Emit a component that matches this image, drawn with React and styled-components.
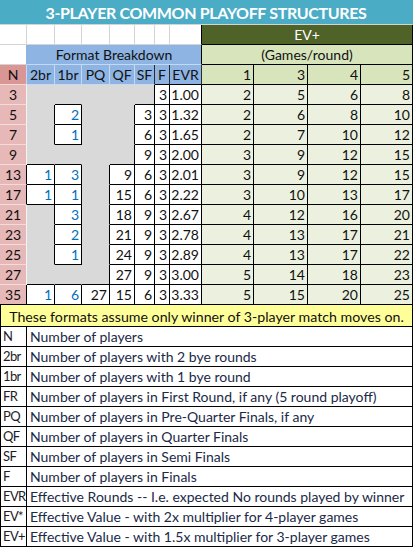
import React from "react";
import styled, { createGlobalStyle } from "styled-components";

const GlobalStyle = createGlobalStyle`
  body {
    margin: 0;
    background: #ffffff;
    font-family: Lato, "Liberation Sans", sans-serif;
  }
`;

const BLACK = "#000000";
const GRAY = "#d9d9d9";
const PINK = "#e6b8b7";
const PINK_LINE = "#f2dcdb";
const GRID = "#d4d4d4";
const BLUE_HEAD = "#8db4e2";
const BLUE_LINE = "#c5d9f1";
const GREEN_HEAD = "#d8e4bc";
const GREEN_CELL = "#ebf1de";
const OLIVE = "#4f6228";
const TEAL = "#4bacc6";
const NUM_BLUE = "#0070c0";

const Sheet = styled.div`
  display: grid;
  grid-template-columns: 27px 28px 27px 28px 25px 20px 15px 32px 52px 54px 53px 52px;
  grid-auto-rows: minmax(20px, auto);
  width: 414px;
  font-size: 14px;
  color: #111111;
`;

const Cell = styled.div`
  grid-column: span ${(p) => p.$span || 1};
  box-sizing: border-box;
  display: flex;
  align-items: center;
  justify-content: ${(p) =>
    p.$align === "right" ? "flex-end" : p.$align === "left" ? "flex-start" : "center"};
  padding: 0 ${(p) => (p.$align === "right" ? "2px" : p.$align === "left" ? "3px" : "0")};
  background: ${(p) => p.$bg || "#ffffff"};
  color: ${(p) => p.$fg || "#111111"};
  border-right: 1px solid ${(p) => p.$right || GRID};
  border-bottom: 1px solid ${(p) => p.$bottom || GRID};
  border-left: ${(p) => (p.$left ? `1px solid ${p.$left}` : "none")};
  white-space: nowrap;
  overflow: hidden;
  line-height: 19px;
`;

const Title = styled(Cell)`
  height: 25px;
  font-size: 16px;
  font-weight: 700;
  color: #ffffff;
  letter-spacing: -0.35px;
`;

const Note = styled(Cell)`
  height: 22px;
  font-size: 14.2px;
  padding-top: 1px;
`;

const LegendCode = styled(Cell)`
  color: #1c1c28;
  padding-left: 2px;
  font-size: 13px;
  letter-spacing: -0.6px;
`;

const LegendText = styled(Cell)`
  color: #1b2a47;
`;

const leftHeads = ["2br", "1br", "PQ", "QF", "SF", "F", "EVR"];
const evHeads = [1, 3, 4, 5];

const b = (v) => ({ v, blue: true });
const _ = null;

const rows = [
  { n: 3, left: [_, _, _, _, _, 3, "1.00"], ev: [2, 5, 6, 8] },
  { n: 5, left: [_, b(2), _, _, 3, 3, "1.32"], ev: [2, 6, 8, 10] },
  { n: 7, left: [_, b(1), _, _, 6, 3, "1.65"], ev: [2, 7, 10, 12] },
  { n: 9, left: [_, _, _, _, 9, 3, "2.00"], ev: [3, 9, 12, 15] },
  { n: 13, left: [b(1), b(3), _, 9, 6, 3, "2.01"], ev: [3, 9, 12, 15] },
  { n: 17, left: [b(1), b(1), _, 15, 6, 3, "2.22"], ev: [3, 10, 13, 17] },
  { n: 21, left: [_, b(3), _, 18, 9, 3, "2.67"], ev: [4, 12, 16, 20] },
  { n: 23, left: [_, b(2), _, 21, 9, 3, "2.78"], ev: [4, 13, 17, 21] },
  { n: 25, left: [_, b(1), _, 24, 9, 3, "2.89"], ev: [4, 13, 17, 22] },
  { n: 27, left: [_, _, _, 27, 9, 3, "3.00"], ev: [5, 14, 18, 23] },
  { n: 35, left: [b(1), b(6), 27, 15, 6, 3, "3.33"], ev: [5, 15, 20, 25] },
];

const legend = [
  ["N", "Number of players"],
  ["2br", "Number of players with 2 bye rounds"],
  ["1br", "Number of players with 1 bye round"],
  ["FR", "Number of players in First Round, if any (5 round playoff)"],
  ["PQ", "Number of players in Pre-Quarter Finals, if any"],
  ["QF", "Number of players in Quarter Finals"],
  ["SF", "Number of players in Semi Finals"],
  ["F", "Number of players in Finals"],
  ["EVR", "Effective Rounds -- I.e. expected No rounds played by winner"],
  ["EV*", "Effective Value - with 2x multiplier for 4-player games"],
  ["EV+", "Effective Value - with 1.5x multiplier for 3-player games"],
];

const boxed = (r, c) => {
  const row = rows[r];
  if (!row || c > 6) return false;
  return row.left[c] !== null && row.left[c] !== undefined;
};

function DataRow({ row, r }) {
  const last = r === rows.length - 1;
  return (
    <>
      <Cell $bg={PINK} $right={boxed(r, 0) ? BLACK : "#f4f4f4"} $bottom={last ? BLACK : PINK_LINE}>
        {row.n}
      </Cell>
      {row.left.map((cell, c) => {
        const isBox = boxed(r, c);
        const right = c === 6 || isBox || boxed(r, c + 1) ? BLACK : GRAY;
        const bottom = last || isBox || boxed(r + 1, c) ? BLACK : GRAY;
        const value = cell && typeof cell === "object" ? cell.v : cell;
        return (
          <Cell
            key={c}
            $bg={isBox ? "#ffffff" : GRAY}
            $fg={cell && cell.blue ? NUM_BLUE : "#111111"}
            $align="right"
            $right={right}
            $bottom={bottom}
          >
            {value}
          </Cell>
        );
      })}
      {row.ev.map((v, i) => (
        <Cell key={`ev${i}`} $bg={GREEN_CELL} $align="right" $right={BLACK} $bottom={BLACK}>
          {v}
        </Cell>
      ))}
    </>
  );
}

export default function App() {
  return (
    <>
      <GlobalStyle />
      <Sheet>
        <Title $span={12} $bg={TEAL} $right={TEAL} $bottom={GRID}>
          3-PLAYER COMMON PLAYOFF STRUCTURES
        </Title>

        {Array.from({ length: 8 }).map((_, i) => (
          <Cell key={`blank${i}`} $right={i === 7 ? BLACK : GRID} />
        ))}
        <Cell $span={4} $bg={OLIVE} $fg="#ffffff" $right={BLACK} $bottom={BLACK}>
          EV+
        </Cell>

        <Cell $right={BLUE_HEAD} $bottom={GRID} />
        <Cell $span={7} $bg={BLUE_HEAD} $right={BLACK} $bottom={BLUE_LINE}>
          Format Breakdown
        </Cell>
        <Cell $span={4} $bg={GREEN_HEAD} $right={BLACK} $bottom={BLACK}>
          (Games/round)
        </Cell>

        <Cell $bg="#da9694" $right={BLUE_LINE} $bottom={PINK_LINE}>
          N
        </Cell>
        {leftHeads.map((h, c) => (
          <Cell
            key={h}
            $bg={BLUE_HEAD}
            $right={c >= 4 ? "#2b2b2b" : BLUE_LINE}
            $bottom={boxed(0, c) ? BLACK : BLUE_LINE}
          >
            {h}
          </Cell>
        ))}
        {evHeads.map((h) => (
          <Cell key={`h${h}`} $bg={GREEN_HEAD} $align="right" $right={BLACK} $bottom={BLACK}>
            {h}
          </Cell>
        ))}

        {rows.map((row, r) => (
          <DataRow key={row.n} row={row} r={r} />
        ))}

        <Note $span={12} $bg="#ffff99" $right={BLACK} $bottom={BLACK} $left={BLACK}>
          These formats assume only winner of 3-player match moves on.
        </Note>

        {legend.map(([code, text]) => (
          <React.Fragment key={code}>
            <LegendCode $align="left" $right={BLACK} $bottom={BLACK} $left={BLACK}>
              {code}
            </LegendCode>
            <LegendText $span={11} $align="left" $right={BLACK} $bottom={BLACK}>
              {text}
            </LegendText>
          </React.Fragment>
        ))}
      </Sheet>
    </>
  );
}
